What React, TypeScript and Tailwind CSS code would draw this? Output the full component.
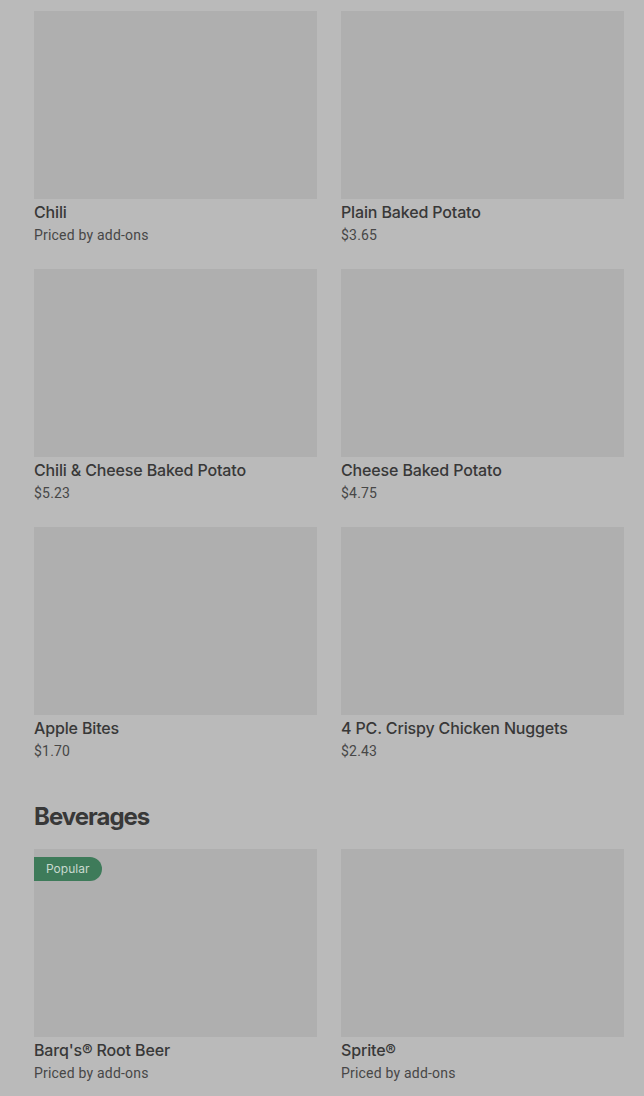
const sides = [
  { name: "Chili", price: "Priced by add-ons" },
  { name: "Plain Baked Potato", price: "$3.65" },
  { name: "Chili & Cheese Baked Potato", price: "$5.23" },
  { name: "Cheese Baked Potato", price: "$4.75" },
  { name: "Apple Bites", price: "$1.70" },
  { name: "4 PC. Crispy Chicken Nuggets", price: "$2.43" },
];

const beverages = [
  { name: "Barq's® Root Beer", price: "Priced by add-ons", popular: true },
  { name: "Sprite®", price: "Priced by add-ons" },
];

type Item = { name: string; price: string; popular?: boolean };

function ItemCard({ item }: { item: Item }) {
  return (
    <div className="flex flex-col">
      <div className="relative h-[188px] w-full bg-[#afafaf]">
        {item.popular && (
          <span className="absolute left-0 top-2 flex h-6 items-center rounded-r-full bg-[#3e7b5a] pl-3 pr-[13px] font-['Inter',sans-serif] text-[12px] text-[#c9d9cf]">
            Popular
          </span>
        )}
      </div>
      <div className="mt-[3px] font-['Inter',sans-serif] text-[16px] font-medium leading-5 tracking-[-0.15px] text-[#383838]">
        {item.name}
      </div>
      <div className="mt-[3px] text-[14px] leading-5 tracking-[0.2px] text-[#474747]">{item.price}</div>
    </div>
  );
}

export default function App() {
  return (
    <div
      className="min-h-[1096px] w-full bg-[#bababa] pl-[34px] pr-[20px] pt-[11px]"
      style={{ fontFamily: "Roboto, 'Liberation Sans', sans-serif" }}
    >
      <div className="grid grid-cols-2 gap-6">
        {sides.map((item) => (
          <ItemCard key={item.name} item={item} />
        ))}
      </div>

      <h2 className="mt-10 mb-4 font-['Inter',sans-serif] text-[24px] font-bold leading-8 tracking-[-1px] text-[#383838]">
        Beverages
      </h2>

      <div className="grid grid-cols-2 gap-6">
        {beverages.map((item) => (
          <ItemCard key={item.name} item={item} />
        ))}
      </div>
    </div>
  );
}
